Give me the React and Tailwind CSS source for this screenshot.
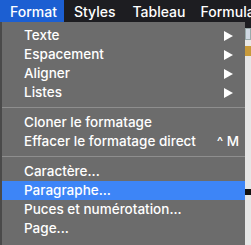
export default function App() {
  const font = { fontFamily: 'Inter, "Liberation Sans", sans-serif' };
  const Arrow = () => (
    <svg width="9" height="10" viewBox="0 0 9 10" className="mr-[12px]">
      <path d="M0 0 L9 5 L0 10 Z" fill="white" />
    </svg>
  );
  const Row = ({ children, right, active }) => (
    <div
      className={`h-[19px] flex items-center justify-between pl-[22px] ${
        active ? "bg-[#3d85f7]" : ""
      }`}
    >
      <span>{children}</span>
      {right}
    </div>
  );
  const Sep = () => <div className="h-[1px] bg-[#8e8e8e] my-[5px]" />;
  return (
    <div
      className="w-[251px] h-[245px] bg-[#1d1d21] flex flex-col overflow-hidden text-white"
      style={font}
    >
      <div className="h-[22px] flex items-center text-[14px] font-medium shrink-0 whitespace-nowrap">
        <div className="h-full w-[64px] shrink-0 bg-[#1c5fd2] flex items-center pl-[10px]">Format</div>
        <div className="pl-[10px]">Styles</div>
        <div className="pl-[17px]">Tableau</div>
        <div className="pl-[15px]">Formula</div>
      </div>
      <div className="flex flex-1">
        <div className="w-[2px] bg-[#4a4a4a]" />
        <div className="w-[243px] bg-[#6c6c6c] pt-[4px] text-[13.5px] font-medium leading-none">
          <Row right={<Arrow />}>Texte</Row>
          <Row right={<Arrow />}>Espacement</Row>
          <Row right={<Arrow />}>Aligner</Row>
          <Row right={<Arrow />}>Listes</Row>
          <Sep />
          <Row>Cloner le formatage</Row>
          <Row right={<span className="mr-[6px]">^ M</span>}>Effacer le formatage direct</Row>
          <Sep />
          <Row>Caractère...</Row>
          <Row active>Paragraphe...</Row>
          <Row>Puces et numérotation...</Row>
          <Row>Page...</Row>
        </div>
        <div className="flex-1 bg-[#e6e6e6] flex flex-col">
          <div className="h-[6px] bg-[#1d1d21]" />
          <div className="h-[12px] bg-[#cfd8e2] border border-[#9aa]" />
          <div className="h-[6px] bg-[#e8e8e8]" />
          <div className="h-[10px] bg-[#c89a3a]" />
          <div className="flex-1" />
          <div className="h-[6px] bg-[#111]" />
          <div className="h-[50px]" />
        </div>
      </div>
    </div>
  );
}
